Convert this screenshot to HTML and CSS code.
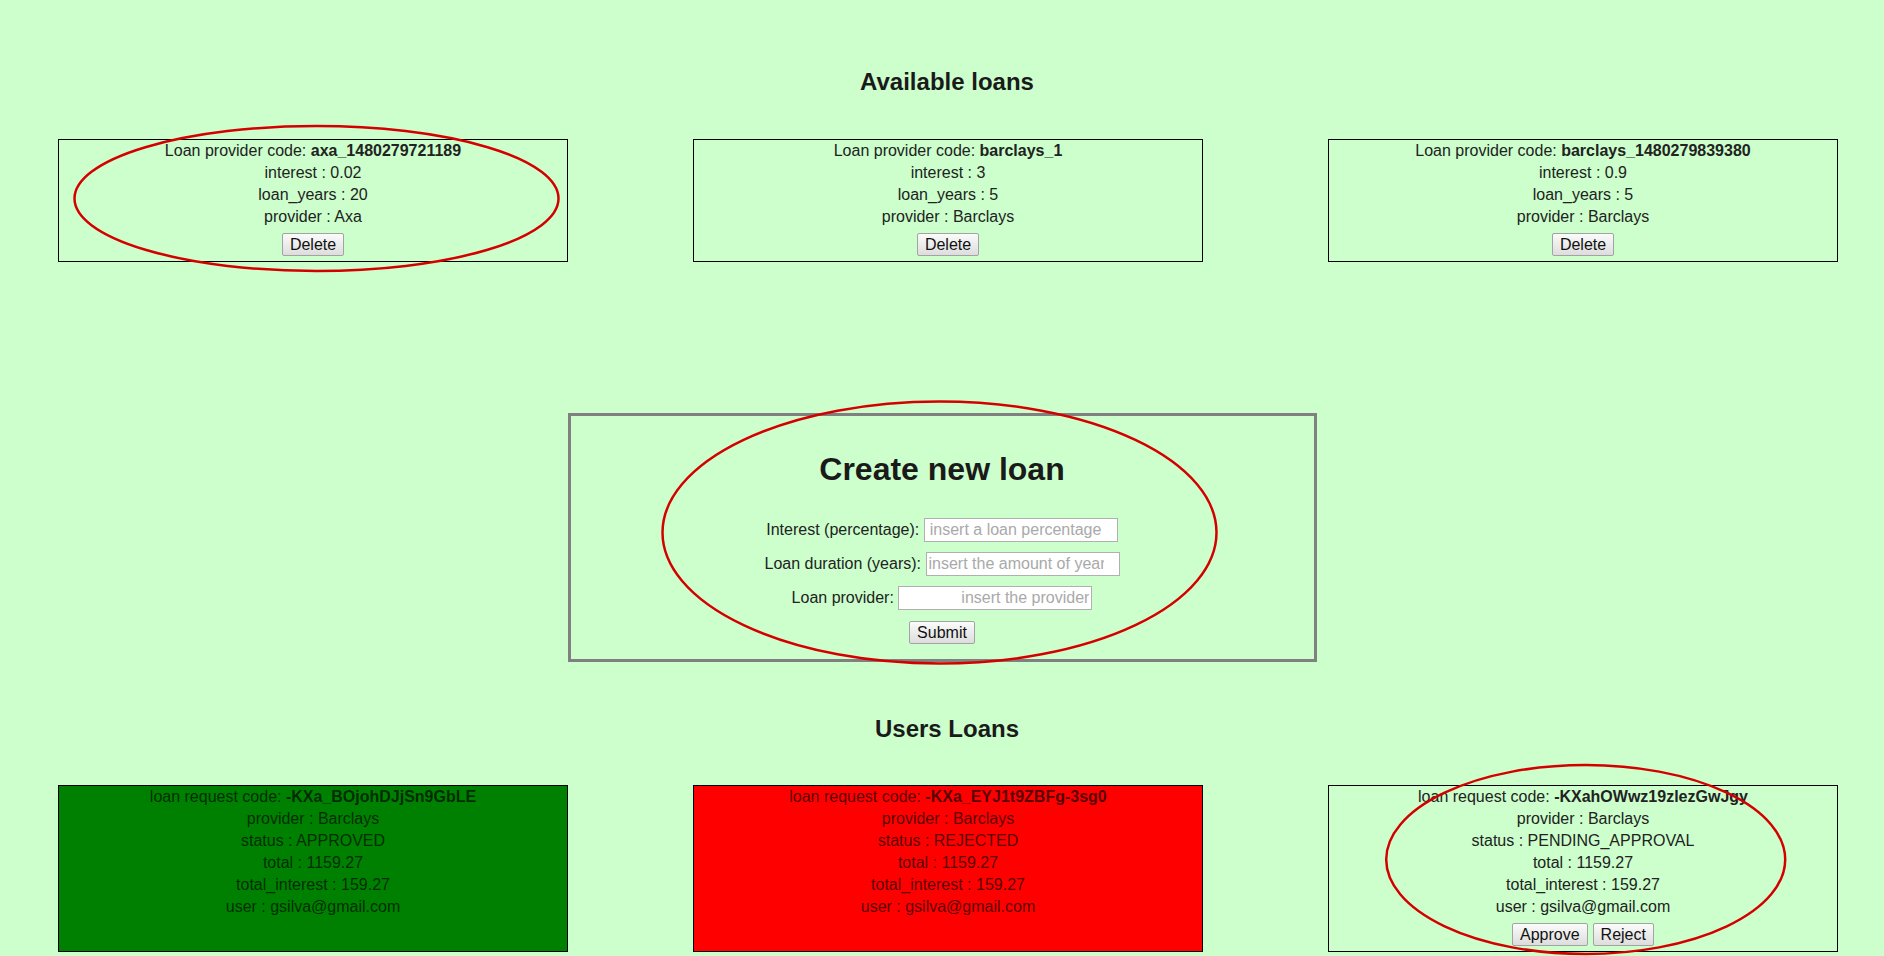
FILE: index.html
```html
<!DOCTYPE html>
<html lang="en">
<head>
<meta charset="utf-8">
<title>Loans</title>
<link rel="stylesheet" href="styles.css">
</head>
<body>
<main class="page">
  <section class="available">
    <h2 class="section-title">Available loans</h2>
    <div class="card-row">
      <div class="card">
        <div class="card-line">Loan provider code: <b>axa_1480279721189</b></div>
        <div class="card-line">interest : 0.02</div>
        <div class="card-line">loan_years : 20</div>
        <div class="card-line">provider : Axa</div>
        <div class="card-actions"><button class="btn">Delete</button></div>
      </div>
      <div class="card">
        <div class="card-line">Loan provider code: <b>barclays_1</b></div>
        <div class="card-line">interest : 3</div>
        <div class="card-line">loan_years : 5</div>
        <div class="card-line">provider : Barclays</div>
        <div class="card-actions"><button class="btn">Delete</button></div>
      </div>
      <div class="card">
        <div class="card-line">Loan provider code: <b>barclays_1480279839380</b></div>
        <div class="card-line">interest : 0.9</div>
        <div class="card-line">loan_years : 5</div>
        <div class="card-line">provider : Barclays</div>
        <div class="card-actions"><button class="btn">Delete</button></div>
      </div>
    </div>
  </section>

  <section class="create-box">
    <h1 class="create-title">Create new loan</h1>
    <form class="create-form">
      <div class="form-row"><label class="form-label">Interest (percentage):</label><input class="form-input form-input--pad" type="text" placeholder="insert a loan percentage"></div>
      <div class="form-row"><label class="form-label">Loan duration (years):</label><input class="form-input form-input--clip" type="text" placeholder="insert the amount of years"></div>
      <div class="form-row"><label class="form-label">Loan provider:</label><input class="form-input form-input--right" type="text" placeholder="insert the provider"></div>
      <div class="form-submit"><button class="btn" type="button">Submit</button></div>
    </form>
  </section>

  <section class="users">
    <h2 class="section-title section-title--users">Users Loans</h2>
    <div class="card-row">
      <div class="card card--approved">
        <div class="card-line">loan request code: <b>-KXa_BOjohDJjSn9GbLE</b></div>
        <div class="card-line">provider : Barclays</div>
        <div class="card-line">status : APPROVED</div>
        <div class="card-line">total : 1159.27</div>
        <div class="card-line">total_interest : 159.27</div>
        <div class="card-line">user : gsilva@gmail.com</div>
      </div>
      <div class="card card--rejected">
        <div class="card-line">loan request code: <b>-KXa_EYJ1t9ZBFg-3sg0</b></div>
        <div class="card-line">provider : Barclays</div>
        <div class="card-line">status : REJECTED</div>
        <div class="card-line">total : 1159.27</div>
        <div class="card-line">total_interest : 159.27</div>
        <div class="card-line">user : gsilva@gmail.com</div>
      </div>
      <div class="card">
        <div class="card-line">loan request code: <b>-KXahOWwz19zlezGwJgy</b></div>
        <div class="card-line">provider : Barclays</div>
        <div class="card-line">status : PENDING_APPROVAL</div>
        <div class="card-line">total : 1159.27</div>
        <div class="card-line">total_interest : 159.27</div>
        <div class="card-line">user : gsilva@gmail.com</div>
        <div class="card-actions"><button class="btn">Approve</button><button class="btn">Reject</button></div>
      </div>
    </div>
  </section>

  <svg class="annotations" width="1884" height="956" viewBox="0 0 1884 956" aria-hidden="true">
    <ellipse cx="316.5" cy="198.5" rx="242" ry="72.5" />
    <ellipse cx="939.5" cy="532.5" rx="277" ry="131" />
    <ellipse cx="1585.7" cy="859.5" rx="199.5" ry="94.5" />
  </svg>
</main>
</body>
</html>
```

FILE: styles.css
```css
html, body {
  margin: 0;
  padding: 0;
}

body {
  background: #ccffcc;
  color: #222;
  font-family: "Liberation Sans", Arial, sans-serif;
  font-size: 16px;
}

.page {
  position: relative;
  padding-top: 68px;
  min-height: 956px;
  box-sizing: border-box;
}

.section-title {
  margin: 0 0 43px;
  padding-left: 10px;
  font-size: 24px;
  line-height: 28px;
  font-weight: bold;
  text-align: center;
  color: #1a1a1a;
}

.section-title--users {
  margin-bottom: 42px;
}

.card-row {
  display: flex;
  align-items: stretch;
  gap: 125px;
  padding-left: 58px;
}

.card {
  width: 510px;
  box-sizing: border-box;
  border: 1px solid #000;
  text-align: center;
  line-height: 22px;
}

.card b {
  font-weight: bold;
}

.card--approved {
  background: #008000;
  color: rgba(0, 0, 0, 0.68);
}

.card--rejected {
  background: #ff0000;
  color: rgba(0, 0, 0, 0.68);
}

.card-actions {
  display: flex;
  justify-content: center;
  gap: 5px;
  margin: 5px 0 5px;
}

.btn {
  box-sizing: border-box;
  height: 23px;
  padding: 0 7px;
  border: 1px solid #a3a3a3;
  border-radius: 2px;
  background: linear-gradient(#fbfbfb, #dddddd);
  color: #111;
  font-family: "Liberation Sans", Arial, sans-serif;
  font-size: 16px;
  line-height: 21px;
}

.create-box {
  width: 749px;
  box-sizing: border-box;
  margin: 151px auto 0;
  border: 3px solid #808080;
  padding: 35px 0 15px;
  text-align: center;
}

.create-title {
  margin: 0 0 30px;
  font-size: 32px;
  line-height: 37px;
  font-weight: bold;
  color: #1a1a1a;
}

.create-form {
  margin: 0;
}

.form-row {
  display: flex;
  justify-content: center;
  align-items: center;
  gap: 4.5px;
  height: 24px;
  margin-bottom: 10px;
}

.form-label {
  color: #222;
}

.form-input {
  box-sizing: border-box;
  width: 194px;
  height: 24px;
  margin: 0;
  padding: 1px 2px;
  border: 1px solid #b0b0b0;
  background: #fff;
  color: #222;
  font-family: "Liberation Sans", Arial, sans-serif;
  font-size: 16px;
  outline: none;
}

.form-input::placeholder {
  color: #a9a9a9;
}

.form-input--pad {
  padding-left: 5px;
}

.form-input--clip {
  padding-right: 15px;
}

.form-input--right {
  text-align: right;
}

.form-submit {
  display: flex;
  justify-content: center;
  padding-top: 1px;
}

.users {
  margin-top: 53px;
}

.annotations {
  position: absolute;
  left: 0;
  top: 0;
  pointer-events: none;
}

.annotations ellipse {
  fill: none;
  stroke: #d40000;
  stroke-width: 2.5;
}
```
